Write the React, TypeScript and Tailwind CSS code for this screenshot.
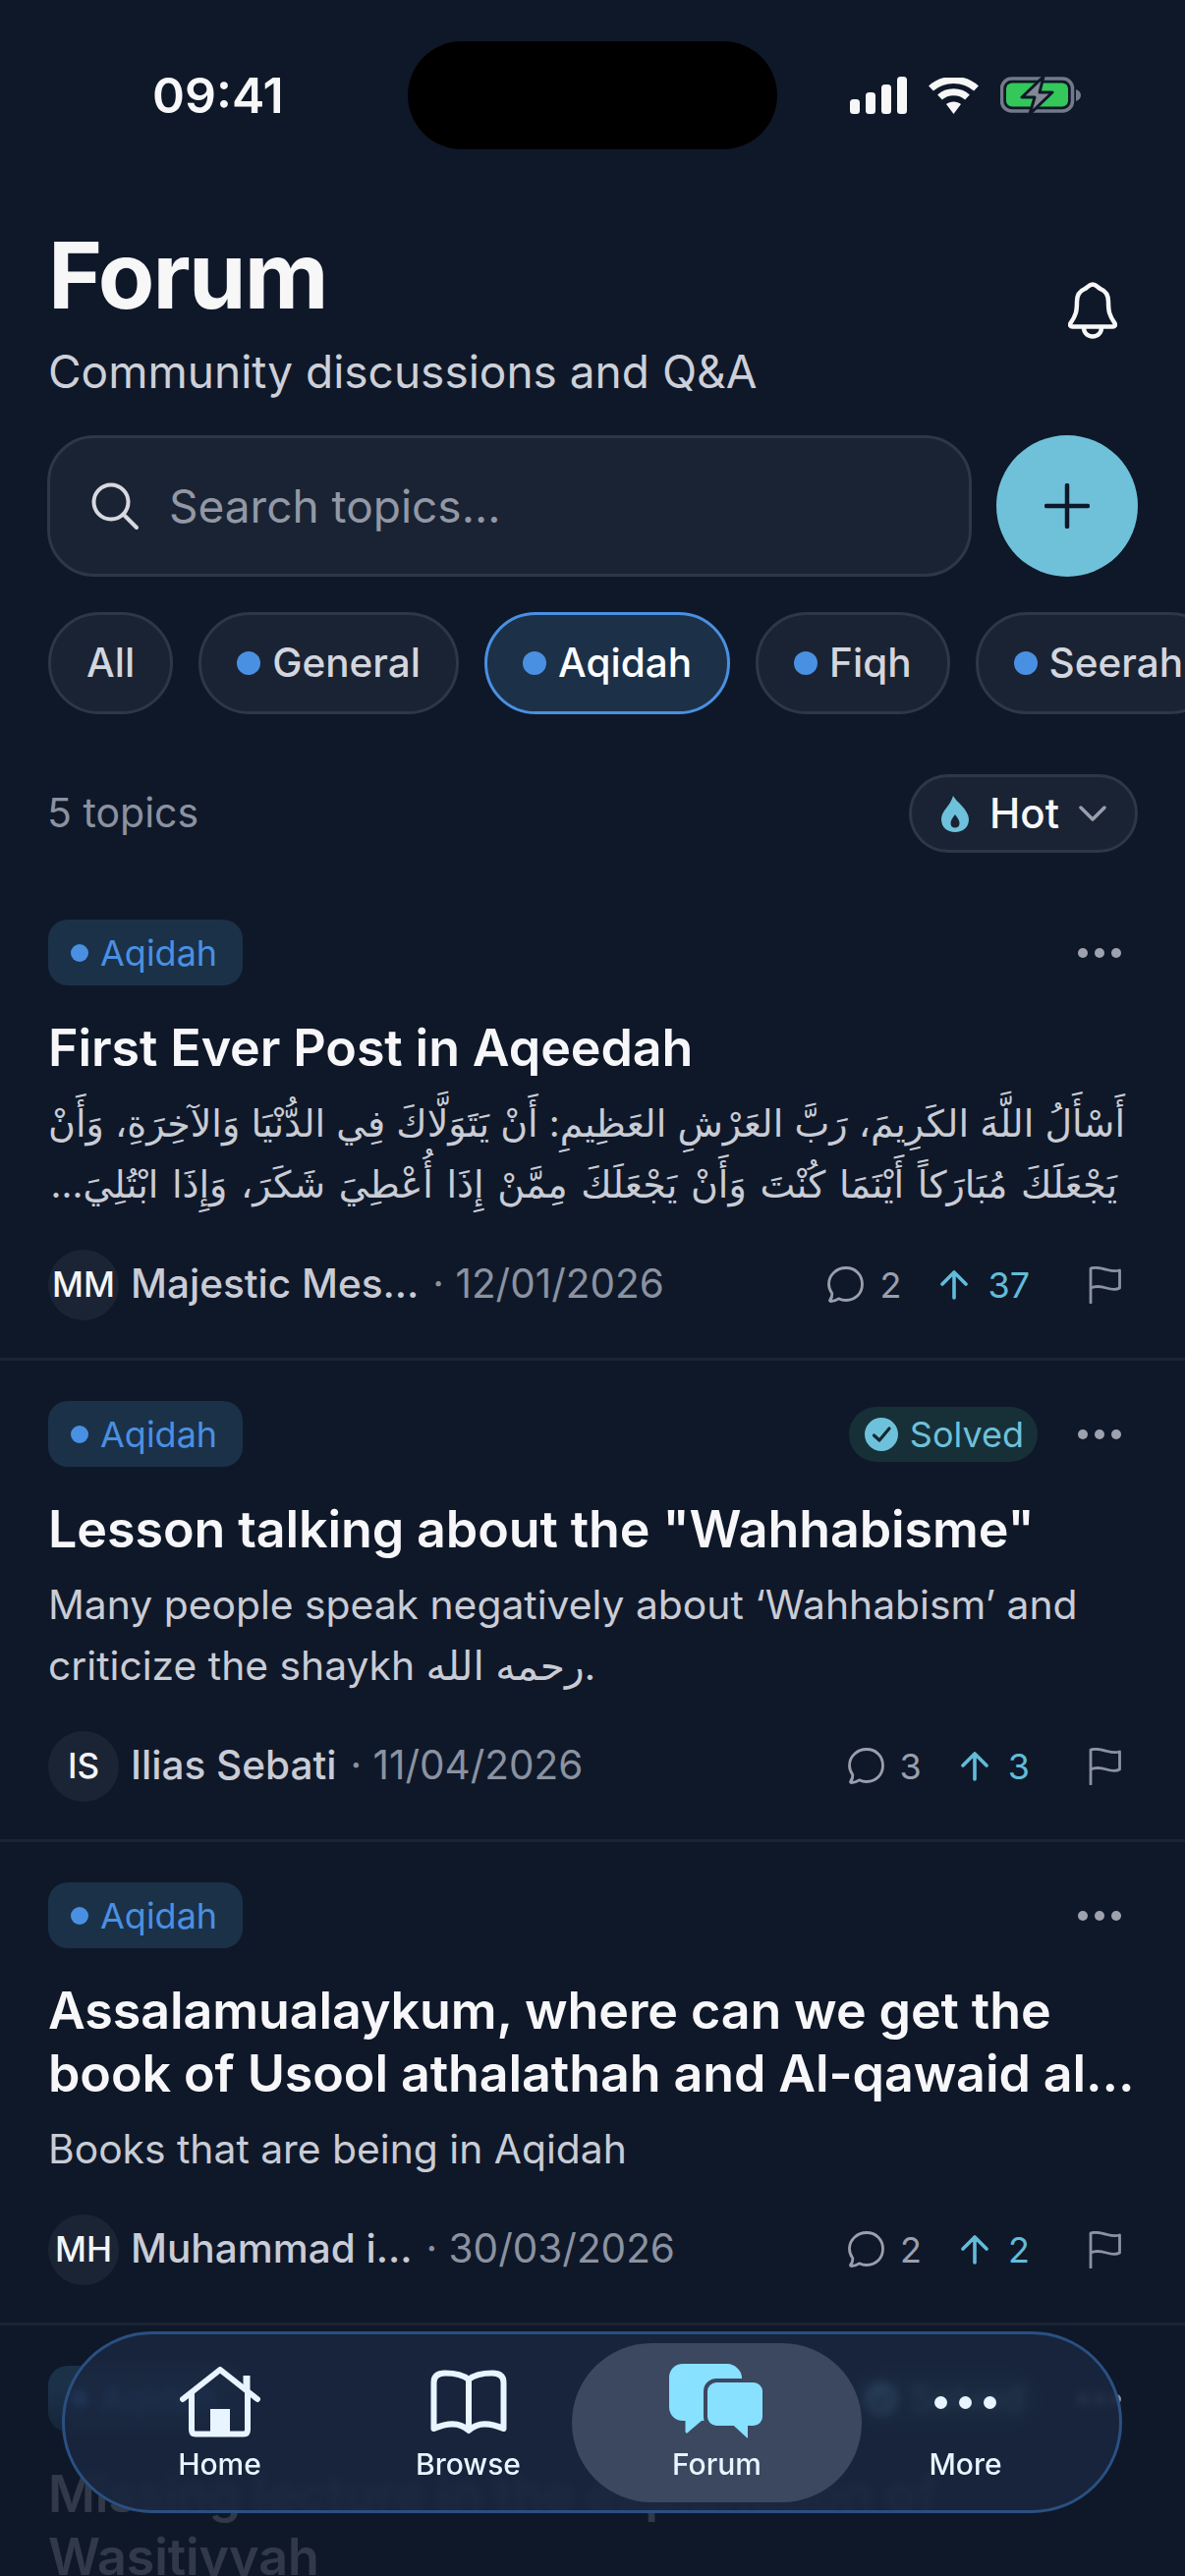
import React from "react";

const BG = "bg-[#0f1829]";

function Signal() {
  return (
    <svg width="58" height="38" viewBox="0 0 58 38" fill="#f7f7f8">
      <rect x="0" y="23" width="10" height="15" rx="3.5" />
      <rect x="16" y="16" width="10" height="22" rx="3.5" />
      <rect x="32" y="8" width="10" height="30" rx="3.5" />
      <rect x="48" y="0" width="10" height="38" rx="3.5" />
    </svg>
  );
}
function Wifi() {
  return (
    <svg width="51" height="37" viewBox="0 0 51 37" fill="none">
      <path d="M2.5 11 C15 -0.5 36 -0.5 48.5 11" stroke="#f7f7f8" strokeWidth="7" />
      <path d="M11.5 20 C19 13 32 13 39.5 20" stroke="#f7f7f8" strokeWidth="7" />
      <path d="M18 27 C22 23.5 29 23.5 33 27 L25.5 37 Z" fill="#f7f7f8" />
    </svg>
  );
}
function Battery() {
  return (
    <svg width="82" height="40" viewBox="0 0 82 40" fill="none">
      <rect x="1.5" y="3" width="72" height="33" rx="10" stroke="#737a87" strokeWidth="3.5" />
      <rect x="6" y="7.5" width="63" height="24" rx="6" fill="#34c759" />
      <path d="M77 14 C80 15 82 17 82 20 C82 23 80 25 77 26 Z" fill="#737a87" />
      <path d="M44 1 L22 22 H35 L30 39 L53 17 H40 Z" fill="#828995" stroke="#0f1829" strokeWidth="3" strokeLinejoin="round" />
    </svg>
  );
}
function Bell() {
  return (
    <svg width="50" height="58" viewBox="0 0 50 58" fill="none" stroke="#f7f7f8" strokeWidth="4.5" strokeLinejoin="round">
      <path d="M25 2.5 C29 2.5 30 6 33 7 C38 9 41 14 41 20 C41 30 42 34 47.5 42 C48.5 44 47.5 45.5 45.5 45.5 H4.5 C2.5 45.5 1.5 44 2.5 42 C8 34 9 30 9 20 C9 14 12 9 17 7 C20 6 21 2.5 25 2.5 Z" />
      <path d="M16 46 C16 52 20 55.5 25 55.5 C30 55.5 34 52 34 46" />
    </svg>
  );
}
function SearchIcon() {
  return (
    <svg width="50" height="50" viewBox="0 0 50 50" fill="none" stroke="#d6d9df" strokeWidth="4" strokeLinecap="round">
      <circle cx="21" cy="21" r="17.5" />
      <path d="M33.5 33.5 L47 47" />
    </svg>
  );
}
function Plus() {
  return (
    <svg width="46" height="46" viewBox="0 0 46 46" fill="none" stroke="#0f1829" strokeWidth="4.5" strokeLinecap="round">
      <path d="M23 2 V44 M2 23 H44" />
    </svg>
  );
}
function Flame() {
  return (
    <svg width="28" height="37" viewBox="0 0 28 37" fill="none">
      <path fillRule="evenodd" clipRule="evenodd" d="M12 0 C15 6 28 14 28 24 C28 32 22 37 14 37 C6 37 0 32 0 24 C0 15 9 11 12 0 Z M14 19 C11 23 9.5 25 9.5 28 C9.5 31 11.5 32.5 14 32.5 C16.5 32.5 18.5 31 18.5 28 C18.5 25 17 23 14 19 Z" fill="#6ec1da" />
    </svg>
  );
}
function Chevron() {
  return (
    <svg width="28" height="16" viewBox="0 0 28 16" fill="none" stroke="#9a9fac" strokeWidth="3.5" strokeLinecap="round" strokeLinejoin="round">
      <path d="M2 2 L14 14 L26 2" />
    </svg>
  );
}
function Bubble() {
  return (
    <svg width="37" height="37" viewBox="0 0 37 37" fill="none" stroke="#9a9fac" strokeWidth="2.8" strokeLinejoin="round">
      <path d="M19 1.5 C28.5 1.5 35.5 8.5 35.5 18 C35.5 27.5 28.5 34.5 19 34.5 C16 34.5 13.5 33.8 11.5 32.8 C9 34.5 6 35.5 3.5 35.5 C2.5 35.5 2.2 34.7 2.8 34 C4.5 32 5 30 4.8 27.5 C2.8 24.8 1.5 21.5 1.5 18 C1.5 8.5 9.5 1.5 19 1.5 Z" />
    </svg>
  );
}
function ArrowUp() {
  return (
    <svg width="28" height="30" viewBox="0 0 28 30" fill="none" stroke="#62bcd9" strokeWidth="3.6" strokeLinecap="round" strokeLinejoin="round">
      <path d="M14 28 V2 M2 14 L14 2 L26 14" />
    </svg>
  );
}
function Flag() {
  return (
    <svg width="33" height="38" viewBox="0 0 33 38" fill="none" stroke="#8b92a0" strokeWidth="2.8" strokeLinecap="round" strokeLinejoin="round">
      <path d="M2 37 V2 C8 0 14 2 19 3.5 C24 5 28 5 31.5 4 V22 C28 24 23 23.5 18 22 C13 20.5 7 19.5 2 22" />
    </svg>
  );
}
function Dots() {
  return (
    <div className="flex gap-[7px]">
      <span className="h-[10px] w-[10px] rounded-full bg-[#9ea2af]" />
      <span className="h-[10px] w-[10px] rounded-full bg-[#9ea2af]" />
      <span className="h-[10px] w-[10px] rounded-full bg-[#9ea2af]" />
    </div>
  );
}
function Check() {
  return (
    <svg width="34" height="34" viewBox="0 0 34 34" fill="none">
      <circle cx="17" cy="17" r="17" fill="#6ec1da" />
      <path d="M9.5 18 L15 23 L25 11" stroke="#15282f" strokeWidth="3.2" strokeLinecap="round" strokeLinejoin="round" />
    </svg>
  );
}
function HomeIcon() {
  return (
    <svg width="82" height="72" viewBox="0 0 82 72" fill="none" stroke="#e8f4ff" strokeWidth="6" strokeLinecap="round" strokeLinejoin="round">
      <path d="M3 33 L41 3 L79 33" />
      <path d="M12 27 V64 C12 67 13.5 68.5 16 68.5 H65 C67.5 68.5 69 67 69 64 V27" />
      <path d="M68 23 V9" strokeWidth="7" strokeLinecap="butt" />
      <rect x="31" y="43" width="20" height="25" fill="#e8f4ff" stroke="none" />
    </svg>
  );
}
function BookIcon() {
  return (
    <svg width="78" height="66" viewBox="0 0 78 66" fill="none" stroke="#e8f4ff" strokeWidth="6" strokeLinecap="round" strokeLinejoin="round">
      <path d="M39 10 V60" />
      <path d="M39 10 C33 5 25 3.5 15 3.5 C7 3.5 3.5 7 3.5 13 V60 C15 55 29 52 39 62 C49 52 63 55 74.5 60 V13 C74.5 7 71 3.5 63 3.5 C53 3.5 45 5 39 10 Z" />
    </svg>
  );
}
function ForumIcon() {
  return (
    <svg width="97" height="78" viewBox="0 0 97 78" fill="none">
      <path d="M14 0 H59 C67 0 74 7 74 14 V44 C74 52 67 58 59 58 H33 L20 69 C18 71.5 16.5 71 16.5 68 V58 H14 C6 58 0 52 0 44 V14 C0 6 6 0 14 0 Z" fill="#87e1ff" />
      <path d="M48 17 H86 C92 17 97 22 97 28 V54 C97 60 92 65 86 65 H82 V75 C82 78 79.5 78 78 77 L65 65 H48 C42 65 37 60 37 54 V28 C37 22 42 17 48 17 Z" fill="#87e1ff" stroke="#3c4760" strokeWidth="4" />
    </svg>
  );
}

function Tag() {
  return (
    <div className="flex h-[67px] w-[198px] items-center gap-[12px] rounded-[20px] bg-[#1b3148] pl-[23px]">
      <span className="h-[18px] w-[18px] rounded-full bg-[#4a90e2]" />
      <span className="text-[36px] leading-none text-[#4a90e2]">Aqidah</span>
    </div>
  );
}

type PostProps = {
  solved?: boolean;
  title: React.ReactNode;
  body?: React.ReactNode;
  meta?: { initials: string; name: string; date: string; comments: string; ups: string };
  divider?: boolean;
};

function Post({ solved, title, body, meta, divider = true }: PostProps) {
  return (
    <article className={`shrink-0 px-[49px] pt-[41px] pb-[39px] ${divider ? "border-b-[3px] border-[#1b2434]" : ""}`}>
      <div className="flex items-center justify-between">
        <Tag />
        <div className="flex items-center gap-[41px] pr-[16px]">
          {solved && (
            <div className="flex h-[56px] items-center gap-[12px] rounded-[28px] bg-[#173038] pl-[16px] pr-[14px]">
              <Check />
              <span className="text-[36px] leading-none text-[#6ec1da]">Solved</span>
            </div>
          )}
          <Dots />
        </div>
      </div>
      <h2 className="mt-[32px] whitespace-nowrap text-[52px] leading-[64px] font-semibold tracking-[-0.1px] text-[#f7f7f9]">{title}</h2>
      {body && <div className="mt-[13px] whitespace-nowrap text-[40.8px] leading-[62px] text-[#c9ccd5]">{body}</div>}
      {meta && (
        <div className="mt-[36px] flex h-[71px] items-center justify-between">
          <div className="flex items-center">
            <div className="flex h-[72px] w-[72px] items-center justify-center rounded-full bg-[#1b2435] text-[35px] font-medium text-[#f4f5f7]">{meta.initials}</div>
            <span className="ml-[12px] text-[40.5px] font-medium text-[#c9ccd5]">{meta.name}</span>
            <span className="ml-[14px] text-[40.5px] text-[#8b92a0]">· {meta.date}</span>
          </div>
          <div className="flex items-center">
            <Bubble />
            <span className="ml-[16px] text-[36px] text-[#9a9fac]">{meta.comments}</span>
            <span className="ml-[40px]"><ArrowUp /></span>
            <span className="ml-[20px] text-[36px] text-[#62bcd9]">{meta.ups}</span>
            <span className="ml-[60px] pr-[16px]"><Flag /></span>
          </div>
        </div>
      )}
    </article>
  );
}

function Chip({ label, dot = true, active = false }: { label: string; dot?: boolean; active?: boolean }) {
  return (
    <div className={`flex h-[104px] shrink-0 items-center gap-[12px] rounded-[52px] border-[3px] px-[36px] ${active ? "border-[#4a90e2] bg-[#1c3148] text-white" : "border-[#2f3746] bg-[#1a2333] text-[#d3d6de]"}`}>
      {dot && <span className="h-[24px] w-[24px] rounded-full bg-[#4a90e2]" />}
      <span className="text-[40.5px] leading-none font-medium">{label}</span>
    </div>
  );
}

function Tab({ icon, label, active }: { icon: React.ReactNode; label: string; active?: boolean }) {
  return (
    <div className={`flex flex-col items-center ${active ? "-mx-[21px] h-[162px] rounded-[81px] bg-[#3c4760] pt-[22px]" : "pt-[31px]"}`}>
      <div className="flex h-[76px] items-center justify-center">{icon}</div>
      <span className="mt-[7px] text-[30px] leading-[36px] font-medium text-[#e8f4ff]">{label}</span>
    </div>
  );
}

export default function App() {
  return (
    <div className={`relative h-[2622px] w-[1206px] overflow-hidden ${BG} font-['Inter','DejaVu_Sans',sans-serif]`}>
      {/* status bar */}
      <div className="flex h-[224px] items-start pt-[42px]">
        <div className="flex h-[110px] w-[415px] items-center pl-[155px] text-[50px] font-semibold text-[#f7f7f8]">09:41</div>
        <div className="h-[110px] w-[376px] rounded-[55px] bg-black" />
        <div className="flex h-[110px] items-center gap-[22px] pl-[74px]">
          <Signal />
          <Wifi />
          <Battery />
        </div>
      </div>

      {/* header */}
      <header className="flex items-end justify-between px-[49px]">
        <div>
          <h1 className="text-[94px] leading-[112px] font-bold tracking-[-1.8px] text-[#f7f7f8]">Forum</h1>
          <p className="mt-[13px] text-[46px] leading-[58px] text-[#cdd0d8]">Community discussions and Q&amp;A</p>
        </div>
        <div className="mb-[62px] mr-[20px]"><Bell /></div>
      </header>

      {/* search */}
      <div className="mt-[36px] flex gap-[25px] px-[48px]">
        <div className="flex h-[144px] flex-1 items-center gap-[30px] rounded-[48px] border-[3px] border-[#2f3746] bg-[#1a2333] pl-[41px]">
          <SearchIcon />
          <span className="text-[46px] text-[#9298a5]">Search topics...</span>
        </div>
        <button className="flex h-[144px] w-[144px] items-center justify-center rounded-full bg-[#6fc1d9]"><Plus /></button>
      </div>

      {/* chips */}
      <div className="mt-[36px] flex gap-[26px] pl-[49px]">
        <Chip label="All" dot={false} />
        <Chip label="General" />
        <Chip label="Aqidah" active />
        <Chip label="Fiqh" />
        <Chip label="Seerah" />
      </div>

      {/* sort */}
      <div className="mt-[61px] flex h-[80px] items-center justify-between px-[48px]">
        <span className="text-[41px] text-[#8b92a0]">5 topics</span>
        <div className="flex h-[80px] w-[233px] items-center rounded-[40px] border-[3px] border-[#2f3746] bg-[#1a2333] pl-[30px]">
          <Flame />
          <span className="ml-[21px] text-[42px] leading-none font-medium text-[#f7f7f8]">Hot</span>
          <span className="ml-[20px]"><Chevron /></span>
        </div>
      </div>

      {/* posts */}
      <div className="mt-[27px] flex flex-col">
        <Post
          title="First Ever Post in Aqeedah"
          body={
            <div dir="rtl" className="pr-[12px] text-right text-[38px]">
              <div className="[word-spacing:0.5px]">أَسْأَلُ اللَّهَ الكَرِيمَ، رَبَّ العَرْشِ العَظِيمِ: أَنْ يَتَوَلَّاكَ فِي الدُّنْيَا وَالآخِرَةِ، وَأَنْ</div>
              <div className="pr-[8px] [word-spacing:3px]">يَجْعَلَكَ مُبَارَكاً أَيْنَمَا كُنْتَ وَأَنْ يَجْعَلَكَ مِمَّنْ إِذَا أُعْطِيَ شَكَرَ، وَإِذَا ابْتُلِيَ...</div>
            </div>
          }
          meta={{ initials: "MM", name: "Majestic Mes...", date: "12/01/2026", comments: "2", ups: "37" }}
        />
        <Post
          solved
          title={'Lesson talking about the "Wahhabisme"'}
          body={<>Many people speak negatively about ‘Wahhabism’ and<br />criticize the shaykh رحمه الله.</>}
          meta={{ initials: "IS", name: "Ilias Sebati", date: "11/04/2026", comments: "3", ups: "3" }}
        />
        <Post
          title={<>Assalamualaykum, where can we get the<br />book of Usool athalathah and Al-qawaid al...</>}
          body="Books that are being in Aqidah"
          meta={{ initials: "MH", name: "Muhammad i...", date: "30/03/2026", comments: "2", ups: "2" }}
        />
        <Post
          solved
          divider={false}
          title={<>Missing lecture in the explanation of<br />Wasitiyyah</>}
        />
      </div>

      {/* bottom fade over the list */}
      <div className="pointer-events-none absolute inset-x-0 bottom-0 h-[190px] bg-gradient-to-b from-[#0f1829]/0 to-[#0f1829]/85 to-[40%]" />

      {/* floating tab bar */}
      <nav className="absolute left-[63px] top-[2373px] grid h-[185px] w-[1079px] grid-cols-[repeat(4,253px)] items-start rounded-[92px] border-[3px] border-[#2a5082] bg-[#1a2740]/85 pl-[31px] pt-[9px] backdrop-blur-[5px]">
        <div className="-mt-[9px]"><Tab icon={<HomeIcon />} label="Home" /></div>
        <div className="-mt-[9px]"><Tab icon={<BookIcon />} label="Browse" /></div>
        <Tab icon={<ForumIcon />} label="Forum" active />
        <div className="-mt-[9px]">
          <Tab
            icon={
              <div className="flex gap-[12px]">
                <span className="h-[13px] w-[13px] rounded-full bg-[#e8f4ff]" />
                <span className="h-[13px] w-[13px] rounded-full bg-[#e8f4ff]" />
                <span className="h-[13px] w-[13px] rounded-full bg-[#e8f4ff]" />
              </div>
            }
            label="More"
          />
        </div>
      </nav>
    </div>
  );
}
